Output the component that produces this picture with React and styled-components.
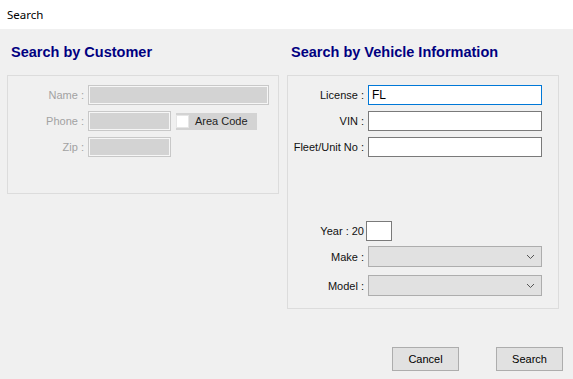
import React from "react";
import styled, { createGlobalStyle } from "styled-components";

const Global = createGlobalStyle`
  html, body {
    margin: 0;
    padding: 0;
    background: #f0f0f0;
  }
  body {
    width: 573px;
    height: 379px;
    overflow: hidden;
    font-family: "Liberation Sans", Arial, sans-serif;
    font-size: 11px;
  }
`;

const Window = styled.div`
  width: 573px;
  height: 379px;
  display: flex;
  flex-direction: column;
  background: #f0f0f0;
`;

const TitleBar = styled.div`
  height: 29px;
  background: #ffffff;
  display: flex;
  align-items: center;
  padding-left: 7px;
  padding-bottom: 1px;
  box-sizing: border-box;
  font-family: "Noto Sans", "Open Sans", sans-serif;
  font-size: 11.5px;
  color: #000;
`;

const Body = styled.div`
  display: flex;
  gap: 8px;
  padding: 0 7px;
  align-items: flex-start;
`;

const Column = styled.div`
  display: flex;
  flex-direction: column;
  width: 272px;
`;

const Heading = styled.h2`
  margin: 15px 0 15px 4px;
  height: 16px;
  line-height: 16px;
  font-family: "Liberation Sans", Arial, sans-serif;
  font-weight: bold;
  font-size: 14.5px;
  color: #000080;
`;

const GroupBox = styled.div`
  box-sizing: border-box;
  height: ${p => p.h}px;
  border: 1px solid #dcdcdc;
  padding-top: 9px;
  display: flex;
  flex-direction: column;
`;

const Row = styled.div`
  display: flex;
  align-items: center;
  gap: 4px;
  margin-bottom: ${p => (p.mb != null ? p.mb : 6)}px;
  margin-top: ${p => p.mt || 0}px;
`;

const Label = styled.span`
  width: 76px;
  text-align: right;
  white-space: nowrap;
  color: ${p => (p.disabled ? "#a2a2a2" : "#111")};
  margin-right: ${p => p.pull || 0}px;
`;

const Input = styled.div`
  box-sizing: border-box;
  width: ${p => p.w}px;
  height: 20px;
  display: flex;
  align-items: center;
  padding-left: 3px;
  color: #000;
  font-size: 12px;
  background: ${p => (p.disabled ? "#d3d3d3" : "#ffffff")};
  border: 1px solid
    ${p => (p.disabled ? "#c8c8c8" : p.focused ? "#0078d7" : "#7a7a7a")};
  box-shadow: ${p => (p.disabled ? "inset 0 0 0 1px #f6f6f6" : "none")};
`;

const AreaCode = styled.label`
  margin-left: 1px;
  width: 81px;
  height: 17px;
  background: #d3d3d3;
  display: flex;
  align-items: center;
  gap: 6px;
  color: #222;
`;

const CheckBox = styled.span`
  width: 13px;
  height: 13px;
  box-sizing: border-box;
  background: #ffffff;
  border: 1px solid #e6e6e6;
`;

const Combo = styled.div`
  box-sizing: border-box;
  width: 174px;
  height: 21px;
  margin-left: -1px;
  background: #e1e1e1;
  border: 1px solid #adadad;
  display: flex;
  align-items: center;
  justify-content: flex-end;
  padding-right: 6px;
`;

const Footer = styled.div`
  display: flex;
  justify-content: flex-end;
  gap: 37px;
  padding-right: 10px;
  margin-top: 38px;
`;

const Button = styled.button`
  box-sizing: border-box;
  width: 67px;
  height: 24px;
  background: #e1e1e1;
  border: 1px solid #adadad;
  font-family: "Liberation Sans", Arial, sans-serif;
  font-size: 11px;
  color: #000;
  padding: 0 0 1px;
`;

const Chevron = () => (
  <svg width="9" height="6" viewBox="0 0 9 6">
    <path d="M1 1 L4.5 4.5 L8 1" fill="none" stroke="#555" strokeWidth="1" />
  </svg>
);

export default function App() {
  return (
    <Window>
      <Global />
      <TitleBar>Search</TitleBar>
      <Body>
        <Column>
          <Heading>Search by Customer</Heading>
          <GroupBox h={119}>
            <Row>
              <Label disabled>Name :</Label>
              <Input w={181} disabled />
            </Row>
            <Row>
              <Label disabled>Phone :</Label>
              <Input w={83} disabled />
              <AreaCode>
                <CheckBox />
                Area Code
              </AreaCode>
            </Row>
            <Row>
              <Label disabled>Zip :</Label>
              <Input w={83} disabled />
            </Row>
          </GroupBox>
        </Column>
        <Column>
          <Heading>Search by Vehicle Information</Heading>
          <GroupBox h={234}>
            <Row>
              <Label>License :</Label>
              <Input w={174} focused>FL</Input>
            </Row>
            <Row>
              <Label>VIN :</Label>
              <Input w={174} />
            </Row>
            <Row>
              <Label>Fleet/Unit No :</Label>
              <Input w={174} />
            </Row>
            <Row mt={58} mb={5}>
              <Label pull={-2}>Year : 20</Label>
              <Input w={26} />
            </Row>
            <Row mb={8}>
              <Label pull={1}>Make :</Label>
              <Combo>
                <Chevron />
              </Combo>
            </Row>
            <Row>
              <Label pull={1}>Model :</Label>
              <Combo>
                <Chevron />
              </Combo>
            </Row>
          </GroupBox>
        </Column>
      </Body>
      <Footer>
        <Button>Cancel</Button>
        <Button>Search</Button>
      </Footer>
    </Window>
  );
}
